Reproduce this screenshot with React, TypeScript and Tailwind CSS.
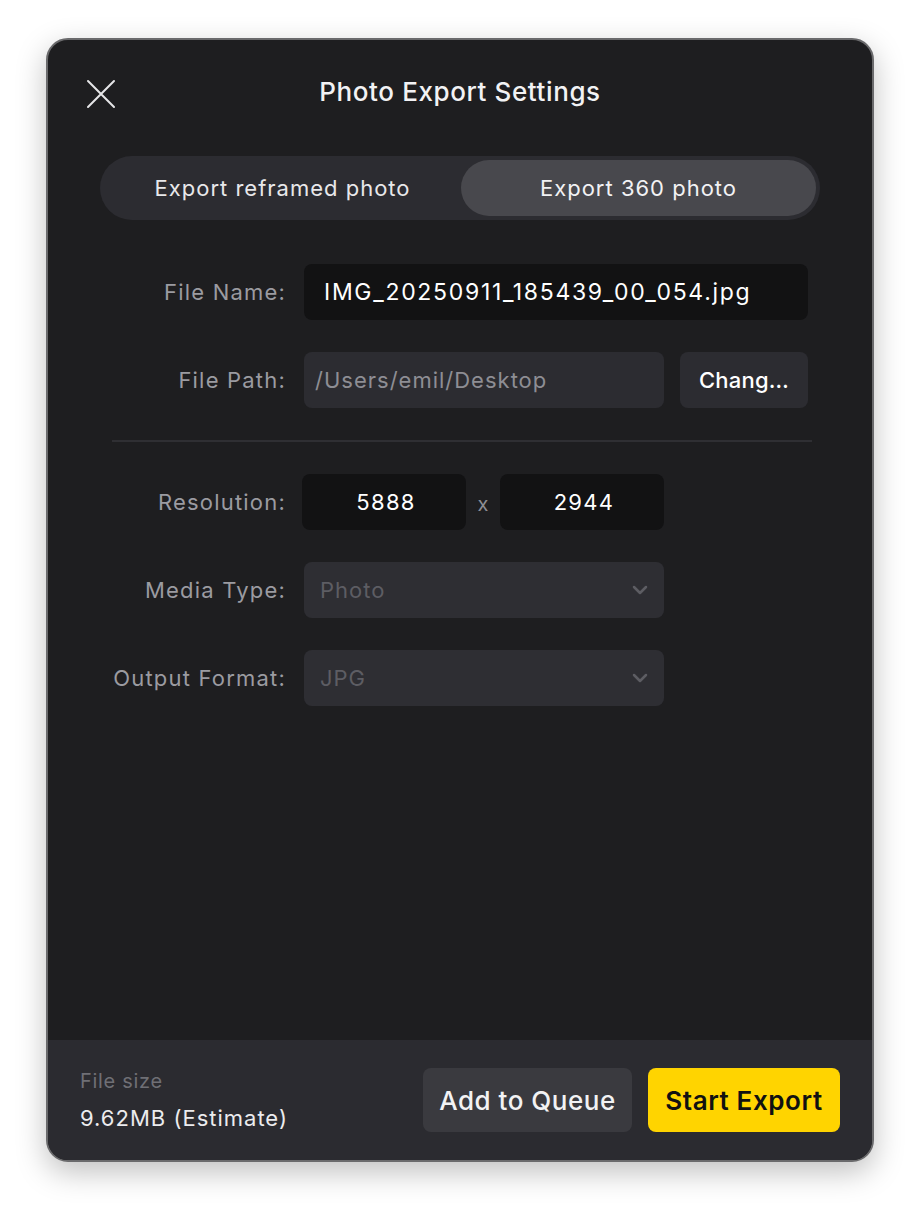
import { ChevronDown } from 'lucide-react';

const font = { fontFamily: 'Inter, "Noto Sans", sans-serif' };

function Label({ children }: { children: React.ReactNode }) {
  return (
    <div className="w-[192px] shrink-0 pr-[18px] text-right text-[22px] tracking-[1.2px] text-[#9b9ba1]">
      {children}
    </div>
  );
}

function Select({ value }: { value: string }) {
  return (
    <div className="flex h-14 w-[360px] items-center justify-between rounded-lg bg-[#2e2e33] pl-4 pr-3">
      <span className="text-[22px] tracking-[1px] text-[#5d5d63]">{value}</span>
      <ChevronDown className="h-6 w-6 text-[#5d5d63]" strokeWidth={2.5} />
    </div>
  );
}

export default function App() {
  return (
    <div className="min-h-[1216px] bg-white pt-[38px] px-[46px] pb-[54px]" style={font}>
      <div className="flex h-[1124px] flex-col overflow-hidden rounded-[22px] border-2 border-[#6a6a6c] bg-[#1e1e20] shadow-[0_10px_30px_rgba(0,0,0,0.25)]">
        {/* header */}
        <div className="relative flex h-[106px] items-center justify-center">
          <button className="absolute left-[38px] top-[39px] text-[#e6e6e8]">
            <svg width="30" height="30" viewBox="0 0 30 30" fill="none" stroke="currentColor" strokeWidth="2" strokeLinecap="round">
              <path d="M2 2 L28 28 M28 2 L2 28" />
            </svg>
          </button>
          <h1 className="pb-1 text-[26px] font-medium tracking-[0.6px] text-[#f2f2f4]">Photo Export Settings</h1>
        </div>

        {/* tabs */}
        <div className="px-[52px] pt-[10px]">
          <div className="flex h-16 items-center rounded-full bg-[#2c2c31] p-1">
            <div className="flex h-14 flex-1 items-center justify-center text-[22px] tracking-[1px] text-[#e8e8ea]">
              Export reframed photo
            </div>
            <div className="flex h-14 w-[355px] items-center justify-center rounded-full bg-[#48484d] text-[22px] tracking-[1px] text-[#f2f2f4]">
              Export 360 photo
            </div>
          </div>
        </div>

        {/* form */}
        <div className="flex flex-col px-[64px] pt-[44px]">
          <div className="flex items-center">
            <Label>File Name:</Label>
            <div className="flex h-14 w-[504px] items-center rounded-lg bg-[#121213] px-5 text-[23px] tracking-[1.7px] text-white">
              IMG_20250911_185439_00_054.jpg
            </div>
          </div>

          <div className="mt-8 flex items-center">
            <Label>File Path:</Label>
            <div className="flex h-14 w-[360px] items-center rounded-lg bg-[#2c2c31] px-[11px] text-[22px] tracking-[1px] text-[#8e8e94]">
              /Users/emil/Desktop
            </div>
            <button className="ml-4 flex h-14 w-[128px] items-center justify-center rounded-lg bg-[#2c2c31] text-[22px] font-medium tracking-[0.2px] text-white">
              Chang…
            </button>
          </div>

          <div className="mt-8 h-[2px] w-[700px] bg-[#2f2f33]" />

          <div className="mt-8 flex items-center">
            <div className="w-[190px] shrink-0 pr-[16px] text-right text-[22px] tracking-[1.2px] text-[#9b9ba1]">
              Resolution:
            </div>
            <div className="flex h-14 w-[164px] items-center justify-center rounded-lg bg-[#121213] pl-1 text-[22px] tracking-[1.3px] text-white">
              5888
            </div>
            <div className="flex w-[34px] justify-center pt-1 text-[20px] text-[#8e8e94]">x</div>
            <div className="flex h-14 w-[164px] items-center justify-center rounded-lg bg-[#121213] pl-1 text-[22px] tracking-[1.3px] text-white">
              2944
            </div>
          </div>

          <div className="mt-8 flex items-center">
            <Label>Media Type:</Label>
            <Select value="Photo" />
          </div>

          <div className="mt-8 flex items-center">
            <Label>Output Format:</Label>
            <Select value="JPG" />
          </div>
        </div>

        <div className="flex-1" />

        {/* footer */}
        <div className="flex h-[120px] items-center justify-between bg-[#2b2b30] pl-[32px] pr-[32px]">
          <div className="flex flex-col">
            <span className="text-[20px] tracking-[0.7px] text-[#6f6f75]">File size</span>
            <span className="mt-[6px] text-[22px] tracking-[1px] text-[#ececee]">9.62MB (Estimate)</span>
          </div>
          <div className="flex gap-4">
            <button className="flex h-16 w-[209px] items-center justify-center rounded-lg bg-[#3a3a3f] text-[26px] font-medium tracking-[0.5px] text-[#f2f2f4]">
              Add to Queue
            </button>
            <button className="flex h-16 w-[192px] items-center justify-center rounded-lg bg-[#ffd400] text-[26px] font-semibold tracking-[0.6px] text-[#111]">
              Start Export
            </button>
          </div>
        </div>
      </div>
    </div>
  );
}
